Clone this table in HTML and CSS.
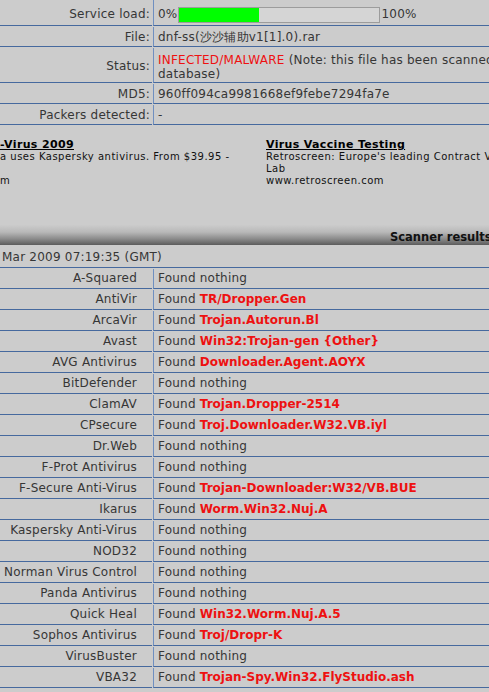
FILE: index.html
```html
<!DOCTYPE html>
<html>
<head>
<meta charset="utf-8">
<link rel="stylesheet" href="styles.css">
</head>
<body>
<div class="page">
  <div class="grid info">
    <div class="lbl tall">Service load:</div>
    <div class="val tall load">
      <span>0%</span>
      <span class="bar"><span class="fill" style="width:40%"></span></span>
      <span>100%</span>
    </div>
    <div class="lbl">File:</div>
    <div class="val">dnf-ss(沙沙辅助v1[1].0).rar</div>
    <div class="lbl status-lbl">Status:</div>
    <div class="val status"><span class="infected">INFECTED/MALWARE</span> (Note: this file has been scanned before. Therefore, this file's scan results will not be stored in the<br>database)</div>
    <div class="lbl">MD5:</div>
    <div class="val">960ff094ca9981668ef9febe7294fa7e</div>
    <div class="lbl">Packers detected:</div>
    <div class="val">-</div>
  </div>

  <div class="ads">
    <div class="ad">
      <a class="ad-title" href="#">-Virus 2009</a>
      <div class="ad-text">a uses Kaspersky antivirus. From $39.95 -<br>&nbsp;</div>
      <div class="ad-url">m</div>
    </div>
    <div class="ad">
      <a class="ad-title" href="#">Virus Vaccine Testing</a>
      <div class="ad-text">Retroscreen: Europe's leading Contract Virology<br>Lab</div>
      <div class="ad-url">www.retroscreen.com</div>
    </div>
  </div>

  <div class="results-head">Scanner results</div>
  <div class="date">Mar 2009 07:19:35 (GMT)</div>

  <div class="grid results">
    <div class="lbl">A-Squared</div><div class="val">Found nothing</div>
    <div class="lbl">AntiVir</div><div class="val">Found <b>TR/Dropper.Gen</b></div>
    <div class="lbl">ArcaVir</div><div class="val">Found <b>Trojan.Autorun.Bl</b></div>
    <div class="lbl">Avast</div><div class="val">Found <b>Win32:Trojan-gen {Other}</b></div>
    <div class="lbl">AVG Antivirus</div><div class="val">Found <b>Downloader.Agent.AOYX</b></div>
    <div class="lbl">BitDefender</div><div class="val">Found nothing</div>
    <div class="lbl">ClamAV</div><div class="val">Found <b>Trojan.Dropper-2514</b></div>
    <div class="lbl">CPsecure</div><div class="val">Found <b>Troj.Downloader.W32.VB.iyl</b></div>
    <div class="lbl">Dr.Web</div><div class="val">Found nothing</div>
    <div class="lbl">F-Prot Antivirus</div><div class="val">Found nothing</div>
    <div class="lbl">F-Secure Anti-Virus</div><div class="val">Found <b>Trojan-Downloader:W32/VB.BUE</b></div>
    <div class="lbl">Ikarus</div><div class="val">Found <b>Worm.Win32.Nuj.A</b></div>
    <div class="lbl">Kaspersky Anti-Virus</div><div class="val">Found nothing</div>
    <div class="lbl">NOD32</div><div class="val">Found nothing</div>
    <div class="lbl">Norman Virus Control</div><div class="val">Found nothing</div>
    <div class="lbl">Panda Antivirus</div><div class="val">Found nothing</div>
    <div class="lbl">Quick Heal</div><div class="val">Found <b>Win32.Worm.Nuj.A.5</b></div>
    <div class="lbl">Sophos Antivirus</div><div class="val">Found <b>Troj/Dropr-K</b></div>
    <div class="lbl">VirusBuster</div><div class="val">Found nothing</div>
    <div class="lbl">VBA32</div><div class="val">Found <b>Trojan-Spy.Win32.FlyStudio.ash</b></div>
  </div>
</div>
</body>
</html>
```

FILE: styles.css
```css
html, body {
  margin: 0;
  padding: 0;
  overflow: hidden;
  background: #cccccc;
}

.page {
  width: 489px;
  height: 692px;
  overflow: hidden;
  font-family: "DejaVu Sans", Verdana, sans-serif;
  font-size: 12px;
  letter-spacing: 0.22px;
  color: #363636;
}

.grid {
  display: grid;
  grid-template-columns: 152px 1fr;
  column-gap: 1px;
  row-gap: 1px;
}

.lbl,
.val {
  line-height: 15px;
  padding: 2px 3px 2px 4px;
  border-bottom: 1px solid #46699e;
  white-space: nowrap;
  overflow: hidden;
}

.lbl {
  text-align: right;
  padding-right: 2px;
}

.val {
  border-left: 1px solid #6f8fc0;
}

.info .lbl {
  display: flex;
  align-items: center;
  justify-content: flex-end;
}

.info .lbl,
.info .val {
  padding-top: 3px;
  padding-bottom: 1px;
}

.info .tall {
  height: 17px;
  padding-top: 6px;
  padding-bottom: 2px;
}

.load {
  display: flex;
  align-items: center;
}

.bar {
  display: block;
  width: 200px;
  height: 14px;
  border: 1px solid #9c9c9c;
  background: #d5d5d5;
  margin: 0 1px 0 1px;
}

.fill {
  display: block;
  height: 100%;
  background: #00ff00;
}

.info .status {
  line-height: 14px;
  padding-top: 5px;
  padding-bottom: 1px;
}

.infected {
  color: #ee1111;
}

.ads {
  display: grid;
  grid-template-columns: 266px 1fr;
  margin-top: 13px;
  font-size: 10px;
  letter-spacing: 0.5px;
  line-height: 12px;
  color: #111;
  white-space: nowrap;
  overflow: hidden;
}

.ad-title {
  display: block;
  font-weight: bold;
  font-size: 11px;
  letter-spacing: 0.35px;
  color: #000;
  text-decoration: underline;
  line-height: 13px;
}

.results-head {
  margin-top: 38px;
  height: 16px;
  padding-top: 4px;
  padding-left: 390px;
  line-height: 16px;
  font-size: 11.5px;
  letter-spacing: 0;
  font-weight: bold;
  color: #111;
  white-space: nowrap;
  overflow: hidden;
  background: linear-gradient(#cbcbcb 0%, #b9b9b9 35%, #8a8a8a 70%, #5c5c5c 100%);
}

.date {
  padding: 5px 0 2px 2px;
  line-height: 15px;
  border-bottom: 1px solid #46699e;
  white-space: nowrap;
}

.results {
  margin-top: 1px;
}

.results .lbl {
  padding-right: 15px;
}

.results b {
  color: #ee1111;
  font-size: 12px;
  letter-spacing: 0;
}
```
